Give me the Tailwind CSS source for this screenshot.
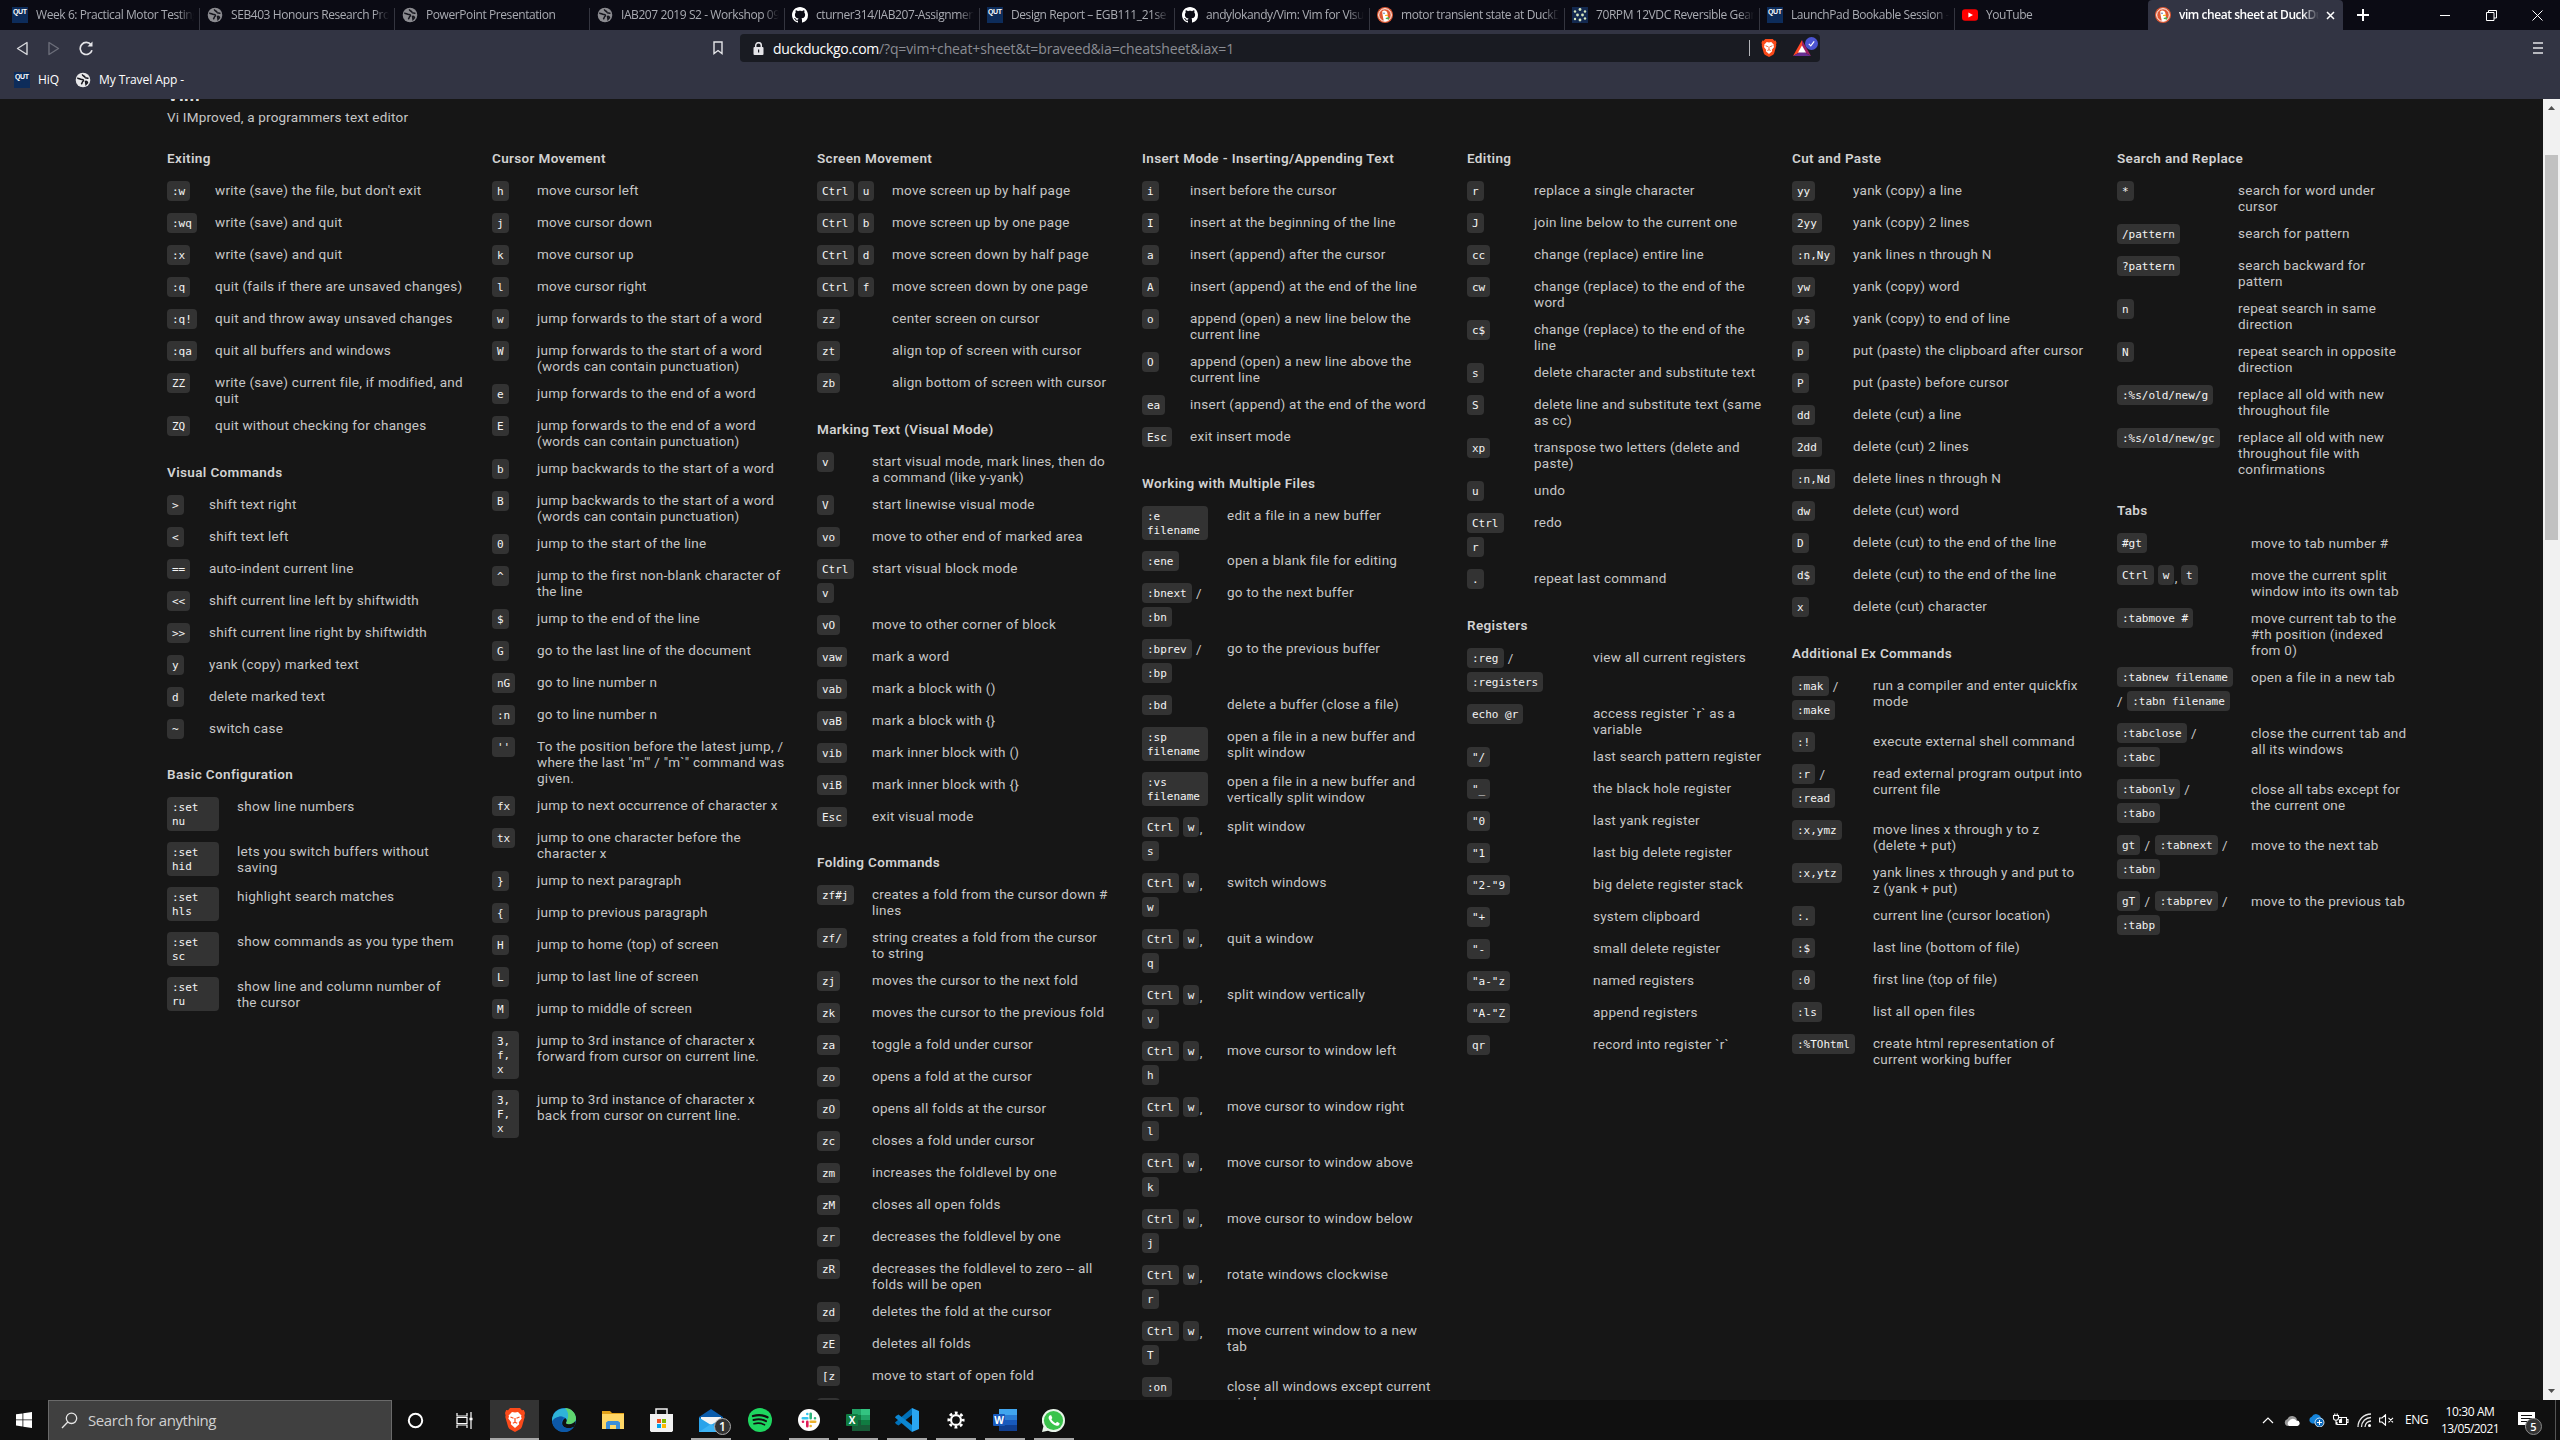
<!DOCTYPE html>
<html lang="en">
<head>
<meta charset="utf-8">
<title>vim cheat sheet at DuckDuckGo</title>
<script src="https://cdn.jsdelivr.net/npm/@tailwindcss/browser@4"></script>
</head>
<body class="bg-[#161616]">
<svg class="hidden">
  <symbol id="qut" viewBox="0 0 16 16"><rect width="16" height="16" fill="#0d2c5a"/><text x="8" y="7" font-size="7" font-weight="700" fill="#fff" text-anchor="middle" font-family="Liberation Sans" textLength="14">QUT</text></symbol>
  <symbol id="globe" viewBox="0 0 16 16"><circle cx="8" cy="8" r="7.3" fill="currentColor"/><path d="M2.2 6.2C4 6 5 7.500 6.800 7.400 8.500 7.300 9 8.600 7.900 9.400 7 10 7.300 11 6.300 12.200M7.500 2.200C7 4 9.500 3.800 10 5.200 10.500 6.500 12 5.500 13.500 6.500M10.500 9.500c1-.5 2 .2 2 1.200l-1.500 1.600z" fill="none" stroke="#15151d" stroke-width="1.500"/></symbol>
  <symbol id="github" viewBox="0 0 16 16"><path fill="#fff" d="M8 0C3.580 0 0 3.580 0 8c0 3.540 2.290 6.530 5.470 7.590.4.070.55-.17.55-.38 0-.19-.01-.82-.01-1.490-2.010.37-2.530-.49-2.690-.94-.09-.23-.48-.94-.82-1.130-.28-.15-.68-.52-.01-.53.63-.01 1.080.58 1.230.82.72 1.210 1.870.87 2.330.66.07-.52.28-.87.51-1.070-1.780-.2-3.640-.89-3.640-3.950 0-.87.31-1.590.82-2.150-.08-.2-.36-1.020.08-2.120 0 0 .67-.21 2.200.82.64-.18 1.320-.27 2-.27s1.360.09 2 .27c1.530-1.040 2.200-.82 2.200-.82.44 1.100.16 1.920.08 2.120.51.56.82 1.270.82 2.150 0 3.070-1.870 3.750-3.650 3.950.29.25.54.73.54 1.480 0 1.070-.01 1.930-.01 2.200 0 .21.15.46.55.38A8.010 8.010 0 0 0 16 8c0-4.420-3.580-8-8-8z"/></symbol>
  <symbol id="ddg" viewBox="0 0 16 16"><circle cx="8" cy="8" r="8" fill="#de5833"/><circle cx="8" cy="8" r="6.300" fill="none" stroke="#fff" stroke-width="1"/><path d="M5.300 4.200c1.500-1.400 5-.8 5.200 2.600.2 2.500.4 4.700.9 6.500-1.500 1-3.500 1-4.600.5C6.300 11 5 6.500 5.300 4.200z" fill="#fff"/><path d="M8 8.200c1.200-.6 3-.5 3.200 0 0 .7-2.300 1-3.200.9z" fill="#fdb813"/><path d="M8.500 11l3.500-1v2.500l-3-.6z" fill="#4caf50"/><circle cx="7" cy="6.200" r=".7" fill="#2d4f8e"/></symbol>
  <symbol id="dots" viewBox="0 0 16 16"><rect width="16" height="16" fill="#13294f"/><g fill="#d6e8c0"><circle cx="8" cy="2.500" r="1.400"/><circle cx="3" cy="4.500" r="1.200"/><circle cx="13" cy="4.500" r="1.200"/><circle cx="5.500" cy="8" r="1.400"/><circle cx="10.500" cy="8" r="1.400"/><circle cx="3" cy="12" r="1.200"/><circle cx="8" cy="13" r="1.400"/><circle cx="13" cy="11.500" r="1.200"/></g></symbol>
  <symbol id="youtube" viewBox="0 0 16 16"><rect y="2.200" width="16" height="11.600" rx="3" fill="#f00"/><path d="M6.400 5.400v5.200L11 8z" fill="#fff"/></symbol>
  <symbol id="brave" viewBox="0 0 20 24"><path d="M5 0h10l2 2.200 1.800-.2L20 5l-.6 2.500.3 1.500-2.700 9.500c-.4 1.300-1 2-2 2.700L10 24l-5-2.800c-1-.7-1.600-1.400-2-2.700L.3 9l.3-1.500L0 5l1.200-3 1.800.2z" fill="#fb4a1a"/><path d="M10 4.500l3-.5 3.500 3.500-.5 1.300.7 1.700-2.900 3.700.4 2-4.200 3.800-4.200-3.800.4-2-2.900-3.700.7-1.700-.5-1.300L7 4z" fill="#fff"/><path d="M5.500 9l3 1.200M14.500 9l-3 1.200M10 10v4M7.800 15.300l2.200-1 2.200 1" stroke="#fb4a1a" stroke-width="1.200" fill="none"/></symbol>
</svg>

<div class="flex h-[1440px] w-[2560px] flex-col overflow-hidden">
  <!-- Tab strip -->
  <div class="flex h-[30px] shrink-0 bg-[#0b0b14] pl-[5px] font-['Open_Sans',sans-serif] text-[12px] text-[#a9abb2]">
    <div id="tabs" class="flex"></div>
    <div class="-ml-[2px] flex h-[30px] w-[195px] items-center rounded-t-[4px] bg-[#323443] pl-[7px]">
      <svg class="size-4 shrink-0"><use href="#ddg"/></svg>
      <span class="ml-2 w-[140px] overflow-hidden whitespace-nowrap font-semibold tracking-[-0.45px] text-white [mask-image:linear-gradient(to_right,black_88%,transparent)]">vim cheat sheet at DuckDuckGo</span>
      <svg class="ml-[7px] size-[9px] shrink-0" viewBox="0 0 9 9" stroke="#fff" stroke-width="1.500"><path d="M1 1l7 7M8 1l-7 7"/></svg>
    </div>
    <svg class="ml-[13px] mt-[8px] size-[14px]" viewBox="0 0 14 14" stroke="#fff" stroke-width="2"><path d="M7 1v12M1 7h12"/></svg>
    <div class="ml-auto flex items-center gap-[35px] pr-[17px]">
      <svg class="size-[11px]" viewBox="0 0 11 11" stroke="#fff"><path d="M0 5.500h10"/></svg>
      <svg class="size-[11px]" viewBox="0 0 11 11" stroke="#fff" fill="none"><path d="M.5 2.500h7.500v8H.5zM2.500 2.500v-2h8v7.500h-2.500"/></svg>
      <svg class="size-[11px]" viewBox="0 0 11 11" stroke="#fff"><path d="M.5.5l10 10M10.500.5l-10 10"/></svg>
    </div>
  </div>
  <!-- Toolbar -->
  <div class="flex h-9 shrink-0 items-center bg-[#323443] pl-4">
    <svg class="h-[15px] w-3" viewBox="0 0 12 15" fill="none" stroke="#d6d7db" stroke-width="1.400" stroke-linejoin="round"><path d="M11 1.500v12L1.500 7.500z"/></svg>
    <svg class="ml-5 h-[15px] w-3" viewBox="0 0 12 15" fill="none" stroke="#6b6d79" stroke-width="1.400" stroke-linejoin="round"><path d="M1 1.500v12l9.500-6z"/></svg>
    <svg class="ml-[19px] size-[15px]" viewBox="0 0 15 15" fill="none" stroke="#e4e4e8" stroke-width="1.700"><path d="M13 9.200A6 6 0 1 1 12 3.800"/><path d="M13.500.5v5H8.500z" fill="#e4e4e8" stroke="none"/></svg>
    <svg class="ml-[619px] h-[14px] w-[10px]" viewBox="0 0 10 14" fill="none" stroke="#e4e4e8" stroke-width="1.400"><path d="M1 1h8v11.500L5 9.500l-4 3z"/></svg>
    <div class="ml-[17px] flex h-7 w-[1080px] items-center rounded-[4px] bg-[#191b22] pl-[13px] font-['Open_Sans',sans-serif] text-[14px]">
      <svg class="h-[13px] w-[11px]" viewBox="0 0 11 13"><rect x=".5" y="5" width="10" height="8" rx="1" fill="#e4e4e8"/><path d="M2.700 5V3.500a2.800 2.800 0 0 1 5.600 0V5" fill="none" stroke="#e4e4e8" stroke-width="1.500"/><rect x="5" y="7.500" width="1.200" height="3" fill="#191b22"/></svg>
      <div class="ml-[9px] whitespace-nowrap text-[#8b8d94]"><span data-w="106" class="text-white">duckduckgo.com</span><span data-w="355">/?q=vim+cheat+sheet&amp;t=braveed&amp;ia=cheatsheet&amp;iax=1</span></div>
      <div class="ml-auto h-4 w-px bg-[#b4b5ba]"></div>
      <svg class="ml-[11px] h-[18px] w-4"><use href="#brave"/></svg>
      <div class="relative ml-4 mr-[7px] h-[18px] w-[20px]">
        <svg class="absolute bottom-px left-0 h-4 w-[18px]" viewBox="0 0 18 16"><path d="M9 0L0 16l9-5z" fill="#ff4724"/><path d="M9 0l9 16-9-5z" fill="#9e1f63"/><path d="M0 16h18l-9-5z" fill="#662d91"/><path d="M9 5.500l4 7H5z" fill="#fff"/></svg>
        <svg class="absolute right-[-5px] top-[-2px] size-[13px]" viewBox="0 0 13 13"><circle cx="6.500" cy="6.500" r="6.500" fill="#4c54d2"/><path d="M3.800 6.800l2 2 3.400-4.500" fill="none" stroke="#fff" stroke-width="1.200"/></svg>
      </div>
    </div>
    <svg class="ml-auto mr-[17px] h-3 w-[10px]" viewBox="0 0 10 12" stroke="#e4e4e8" stroke-width="1.600"><path d="M0 1h10M0 6h10M0 11h10"/></svg>
  </div>
  <!-- Bookmarks bar -->
  <div class="flex h-[33px] shrink-0 items-center bg-[#323443] pb-[5px] pl-[14px] font-['Open_Sans',sans-serif] text-[12px] text-white">
    <svg class="size-4"><use href="#qut"/></svg><span data-w="21" class="ml-2">HiQ</span>
    <svg class="ml-4 size-4 text-[#e8e8ea]"><use href="#globe"/></svg><span data-w="85" class="ml-2 whitespace-nowrap">My Travel App -</span>
  </div>

  <!-- Page -->
  <div class="flex h-[1301px] shrink-0 overflow-hidden">
    <main class="w-[2543px] pl-[167px] font-['Roboto',sans-serif] text-[13.5px] leading-4 tracking-[0.26px] text-[#c6c6c6]">
      <div class="mt-[-16px] h-[45.4px]">
        <h1 class="h-[26px] text-[18px] font-bold leading-6 text-[#dedede]">Vim</h1>
        <p class="tracking-[0.2px]">Vi IMproved, a programmers text editor</p>
      </div>
      <div id="sheet" class="flex"></div>
    </main>
    <div class="flex w-[17px] flex-col items-center bg-[#f1f1f1]">
      <svg class="mt-[7px] h-[4px] w-[7px]" viewBox="0 0 7 4"><path d="M3.500 0L7 4H0z" fill="#505050"/></svg>
      <div class="mt-[45px] h-[385px] w-[13px] bg-[#c1c1c1]"></div>
      <svg class="mb-[7px] mt-auto h-[4px] w-[7px]" viewBox="0 0 7 4"><path d="M3.500 4L7 0H0z" fill="#505050"/></svg>
    </div>
  </div>

  <!-- Taskbar -->
  <div class="flex h-10 shrink-0 items-stretch bg-[#101010] font-['Open_Sans',sans-serif] text-white">
    <div class="flex w-12 items-center justify-center"><svg class="size-4" viewBox="0 0 16 16" fill="#fff"><path d="M0 2.300l6.500-.9v6.100H0zM7.300 1.300L16 0v7.500H7.300zM0 8.300h6.500v6.200L0 13.600zM7.300 8.300H16V16l-8.700-1.200z"/></svg></div>
    <div class="flex w-[344px] items-center border border-b-0 border-[#6a6a6a] bg-[#404040] pl-[12px]">
      <svg class="size-[17px]" viewBox="0 0 17 17" fill="none" stroke="#e6e6e6" stroke-width="1.300"><circle cx="10.500" cy="6.300" r="5.200"/><path d="M6.800 10L1 16"/></svg>
      <span data-w="128" class="ml-[10px] whitespace-nowrap text-[15px] text-[#d0d0d0]">Search for anything</span>
    </div>
    <div class="flex w-[47px] items-center justify-center"><svg class="size-[17px]" viewBox="0 0 17 17"><circle cx="8.500" cy="8.500" r="6.700" fill="none" stroke="#fff" stroke-width="2"/></svg></div>
    <div class="flex w-[51px] items-center justify-center"><svg class="size-[17px]" viewBox="0 0 17 17" fill="none" stroke="#fff" stroke-width="1.200"><path d="M1 1v3h10V1M1 16v-3h10v3M1 5.500h10v6H1zM15 0v17"/><path d="M13.500 7h3" stroke-width="2.500"/></svg></div>
    <div id="apps" class="flex"></div>
    <div class="ml-auto flex items-center">
      <svg class="h-[7px] w-3" viewBox="0 0 12 7" fill="none" stroke="#fff" stroke-width="1.200"><path d="M1 6l5-5 5 5"/></svg>
      <svg class="ml-[10px] h-[11px] w-[17px]" viewBox="0 0 17 11"><path d="M4 11a3.500 3.500 0 0 1-.5-6.900A5 5 0 0 1 13 5" fill="#9a9a9a"/><path d="M5 11a3 3 0 0 1 0-5 4.500 4.500 0 0 1 7.500-.5A2.800 2.800 0 0 1 13.500 11z" fill="#fff"/></svg>
      <svg class="ml-[7px] h-[14px] w-[17px]" viewBox="0 0 17 14"><path d="M4 10.500a3.500 3.500 0 0 1-.3-6.700A5 5 0 0 1 13 5a2.800 2.800 0 0 1 .5 5.500z" fill="#1584da"/><circle cx="11.500" cy="9.500" r="4.500" fill="#0f6cbd" stroke="#fff" stroke-width=".8"/><path d="M9 9.500h5M11.500 7v5" stroke="#fff"/></svg>
      <svg class="ml-[7px] h-[15px] w-[17px]" viewBox="0 0 17 15" fill="none" stroke="#fff" stroke-width="1.100"><path d="M7 4.500h7.500v7H5V9M14.500 6.500H16v3h-1.500M1.500 2.500h5v2.500c0 3-5 3-5 0zM2.800 2.500V.5M5.200 2.500V.5M4 7.500v4"/><path d="M7.500 7v2.500h2V6z" fill="#fff"/></svg>
      <svg class="ml-[8px] size-[15px]" viewBox="0 0 15 15" fill="none" stroke="#e6e6e6" stroke-width="1.300"><path d="M1 14A13 13 0 0 1 14 1M4.500 14A9.500 9.500 0 0 1 14 4.500M8 14A6 6 0 0 1 14 8"/><circle cx="12.500" cy="12.500" r="1.500" fill="#fff" stroke="none"/></svg>
      <svg class="ml-[7px] h-3 w-[15px]" viewBox="0 0 15 12" fill="none" stroke="#fff" stroke-width="1.100"><path d="M.6 4h2.400L6.500.8v10.400L3 8H.6zM9.500 3.800l4.500 4.500M14 3.800L9.500 8.300"/></svg>
      <span data-w="23" class="ml-[11px] whitespace-nowrap text-[12px]">ENG</span>
      <div class="ml-[12px] flex w-[60px] flex-col items-center whitespace-nowrap text-[12px] leading-[17.5px]"><span data-w="49">10:30 AM</span><span data-w="58">13/05/2021</span></div>
      <div class="relative ml-[17px] mr-[14px] size-6">
        <svg class="absolute left-px top-[4px] h-[17px] w-[17px]" viewBox="0 0 17 17"><path d="M0 0h17v13h-6.500L7 16.500V13H0z" fill="#fff"/><path d="M3 3.500h11M3 6.500h11M3 9.500h8" stroke="#101010" stroke-width="1.200"/></svg>
        <div class="absolute left-[8px] top-[10px] flex size-[17px] items-center justify-center rounded-full border border-[#888] bg-[#333] text-[11px] font-semibold leading-none">5</div>
      </div>
      <div class="mr-1 h-10 w-px bg-[#555]"></div>
    </div>
  </div>
</div>

<script>
const esc = s => s.replace(/&/g, '&amp;').replace(/</g, '&lt;');

const tabs = [
  ['qut', 'Week 6: Practical Motor Testing'], ['globe', 'SEB403 Honours Research Project'], ['globe', 'PowerPoint Presentation'],
  ['globe', 'IAB207 2019 S2 - Workshop 09'], ['github', 'cturner314/IAB207-Assignment'], ['qut', 'Design Report – EGB111_21se1'],
  ['github', 'andylokandy/Vim: Vim for Visual'], ['ddg', 'motor transient state at DuckDuckGo'], ['dots', '70RPM 12VDC Reversible Gear'],
  ['qut', 'LaunchPad Bookable Session -'], ['youtube', 'YouTube']
];
document.getElementById('tabs').innerHTML = tabs.map(([icon, title], i) =>
  `<div class="flex h-[30px] w-[195px] items-center pl-[7px]"><svg class="size-4 shrink-0 text-[#8b8b90]"><use href="#${icon}"/></svg>
   <span class="ml-2 w-[158px] overflow-hidden whitespace-nowrap tracking-[-0.42px] [mask-image:linear-gradient(to_right,black_90%,transparent)]">${title}</span>
   <i class="ml-auto mt-[8px] h-[22px] w-px ${i < 10 ? 'bg-[#34353f]' : ''}"></i></div>`).join('');

// Keys: "¦" separates parts, "¶" starts a new line, "/" and "," are plain text.
const columns = [
  [['Exiting', 'w-[48px]', [[':w', "write (save) the file, but don't exit"], [':wq', 'write (save) and quit'], [':x', 'write (save) and quit'], [':q', 'quit (fails if there are unsaved changes)'], [':q!', 'quit and throw away unsaved changes'], [':qa', 'quit all buffers and windows'], ['ZZ', 'write (save) current file, if modified, and\nquit'], ['ZQ', 'quit without checking for changes']]],
   ['Visual Commands', 'w-[42px]', [['>', 'shift text right'], ['<', 'shift text left'], ['==', 'auto-indent current line'], ['<<', 'shift current line left by shiftwidth'], ['>>', 'shift current line right by shiftwidth'], ['y', 'yank (copy) marked text'], ['d', 'delete marked text'], ['~', 'switch case']]],
   ['Basic Configuration', 'w-[70px]', [[':set\nnu', 'show line numbers'], [':set\nhid', 'lets you switch buffers without\nsaving'], [':set\nhls', 'highlight search matches'], [':set\nsc', 'show commands as you type them'], [':set\nru', 'show line and column number of\nthe cursor']]]],
  [['Cursor Movement', 'w-[45px]', [['h', 'move cursor left'], ['j', 'move cursor down'], ['k', 'move cursor up'], ['l', 'move cursor right'], ['w', 'jump forwards to the start of a word'], ['W', 'jump forwards to the start of a word\n(words can contain punctuation)'], ['e', 'jump forwards to the end of a word'], ['E', 'jump forwards to the end of a word\n(words can contain punctuation)'], ['b', 'jump backwards to the start of a word'], ['B', 'jump backwards to the start of a word\n(words can contain punctuation)'], ['0', 'jump to the start of the line'], ['^', 'jump to the first non-blank character of\nthe line'], ['$', 'jump to the end of the line'], ['G', 'go to the last line of the document'], ['nG', 'go to line number n'], [':n', 'go to line number n'], ["''", 'To the position before the latest jump, /\nwhere the last "m\'" / "m`" command was\ngiven.'], ['fx', 'jump to next occurrence of character x'], ['tx', 'jump to one character before the\ncharacter x'], ['}', 'jump to next paragraph'], ['{', 'jump to previous paragraph'], ['H', 'jump to home (top) of screen'], ['L', 'jump to last line of screen'], ['M', 'jump to middle of screen'], ['3,\nf,\nx', 'jump to 3rd instance of character x\nforward from cursor on current line.'], ['3,\nF,\nx', 'jump to 3rd instance of character x\nback from cursor on current line.']]]],
  [['Screen Movement', 'w-[75px]', [['Ctrl¦u', 'move screen up by half page'], ['Ctrl¦b', 'move screen up by one page'], ['Ctrl¦d', 'move screen down by half page'], ['Ctrl¦f', 'move screen down by one page'], ['zz', 'center screen on cursor'], ['zt', 'align top of screen with cursor'], ['zb', 'align bottom of screen with cursor']]],
   ['Marking Text (Visual Mode)', 'w-[55px]', [['v', 'start visual mode, mark lines, then do\na command (like y-yank)'], ['V', 'start linewise visual mode'], ['vo', 'move to other end of marked area'], ['Ctrl¶v', 'start visual block mode'], ['vO', 'move to other corner of block'], ['vaw', 'mark a word'], ['vab', 'mark a block with ()'], ['vaB', 'mark a block with {}'], ['vib', 'mark inner block with ()'], ['viB', 'mark inner block with {}'], ['Esc', 'exit visual mode']]],
   ['Folding Commands', 'w-[55px]', [['zf#j', 'creates a fold from the cursor down #\nlines'], ['zf/', 'string creates a fold from the cursor\nto string'], ['zj', 'moves the cursor to the next fold'], ['zk', 'moves the cursor to the previous fold'], ['za', 'toggle a fold under cursor'], ['zo', 'opens a fold at the cursor'], ['zO', 'opens all folds at the cursor'], ['zc', 'closes a fold under cursor'], ['zm', 'increases the foldlevel by one'], ['zM', 'closes all open folds'], ['zr', 'decreases the foldlevel by one'], ['zR', 'decreases the foldlevel to zero -- all\nfolds will be open'], ['zd', 'deletes the fold at the cursor'], ['zE', 'deletes all folds'], ['[z', 'move to start of open fold'], [']z', 'move to end of open fold']]]],
  [['Insert Mode - Inserting/Appending Text', 'w-[48px]', [['i', 'insert before the cursor'], ['I', 'insert at the beginning of the line'], ['a', 'insert (append) after the cursor'], ['A', 'insert (append) at the end of the line'], ['o', 'append (open) a new line below the\ncurrent line'], ['O', 'append (open) a new line above the\ncurrent line'], ['ea', 'insert (append) at the end of the word'], ['Esc', 'exit insert mode']]],
   ['Working with Multiple Files', 'w-[85px]', [[':e\nfilename', 'edit a file in a new buffer'], [':ene', 'open a blank file for editing'], [':bnext¦/¶:bn', 'go to the next buffer'], [':bprev¦/¶:bp', 'go to the previous buffer'], [':bd', 'delete a buffer (close a file)'], [':sp\nfilename', 'open a file in a new buffer and\nsplit window'], [':vs\nfilename', 'open a file in a new buffer and\nvertically split window'], ['Ctrl¦w¦,¶s', 'split window'], ['Ctrl¦w¦,¶w', 'switch windows'], ['Ctrl¦w¦,¶q', 'quit a window'], ['Ctrl¦w¦,¶v', 'split window vertically'], ['Ctrl¦w¦,¶h', 'move cursor to window left'], ['Ctrl¦w¦,¶l', 'move cursor to window right'], ['Ctrl¦w¦,¶k', 'move cursor to window above'], ['Ctrl¦w¦,¶j', 'move cursor to window below'], ['Ctrl¦w¦,¶r', 'rotate windows clockwise'], ['Ctrl¦w¦,¶T', 'move current window to a new\ntab'], [':on', 'close all windows except current\nwindow']]]],
  [['Editing', 'w-[67px]', [['r', 'replace a single character'], ['J', 'join line below to the current one'], ['cc', 'change (replace) entire line'], ['cw', 'change (replace) to the end of the\nword'], ['c$', 'change (replace) to the end of the\nline'], ['s', 'delete character and substitute text'], ['S', 'delete line and substitute text (same\nas cc)'], ['xp', 'transpose two letters (delete and\npaste)'], ['u', 'undo'], ['Ctrl¶r', 'redo'], ['.', 'repeat last command']]],
   ['Registers', 'w-[126px]', [[':reg¦/¶:registers', 'view all current registers'], ['echo @r', 'access register `r` as a\nvariable'], ['"/', 'last search pattern register'], ['"_', 'the black hole register'], ['"0', 'last yank register'], ['"1', 'last big delete register'], ['"2-"9', 'big delete register stack'], ['"+', 'system clipboard'], ['"-', 'small delete register'], ['"a-"z', 'named registers'], ['"A-"Z', 'append registers'], ['qr', 'record into register `r`']]]],
  [['Cut and Paste', 'w-[61px]', [['yy', 'yank (copy) a line'], ['2yy', 'yank (copy) 2 lines'], [':n,Ny', 'yank lines n through N'], ['yw', 'yank (copy) word'], ['y$', 'yank (copy) to end of line'], ['p', 'put (paste) the clipboard after cursor'], ['P', 'put (paste) before cursor'], ['dd', 'delete (cut) a line'], ['2dd', 'delete (cut) 2 lines'], [':n,Nd', 'delete lines n through N'], ['dw', 'delete (cut) word'], ['D', 'delete (cut) to the end of the line'], ['d$', 'delete (cut) to the end of the line'], ['x', 'delete (cut) character']]],
   ['Additional Ex Commands', 'w-[81px]', [[':mak¦/¶:make', 'run a compiler and enter quickfix\nmode'], [':!', 'execute external shell command'], [':r¦/¶:read', 'read external program output into\ncurrent file'], [':x,ymz', 'move lines x through y to z\n(delete + put)'], [':x,ytz', 'yank lines x through y and put to\nz (yank + put)'], [':.', 'current line (cursor location)'], [':$', 'last line (bottom of file)'], [':0', 'first line (top of file)'], [':ls', 'list all open files'], [':%TOhtml', 'create html representation of\ncurrent working buffer']]]],
  [['Search and Replace', 'w-[121px]', [['*', 'search for word under\ncursor'], ['/pattern', 'search for pattern'], ['?pattern', 'search backward for\npattern'], ['n', 'repeat search in same\ndirection'], ['N', 'repeat search in opposite\ndirection'], [':%s/old/new/g', 'replace all old with new\nthroughout file'], [':%s/old/new/gc', 'replace all old with new\nthroughout file with\nconfirmations']]],
   ['Tabs', 'w-[134px]', [['#gt', 'move to tab number #'], ['Ctrl¦w¦,¦t', 'move the current split\nwindow into its own tab'], [':tabmove #', 'move current tab to the\n#th position (indexed\nfrom 0)'], [':tabnew filename¶/¦:tabn filename', 'open a file in a new tab'], [':tabclose¦/¶:tabc', 'close the current tab and\nall its windows'], [':tabonly¦/¶:tabo', 'close all tabs except for\nthe current one'], ['gt¦/¦:tabnext¦/¶:tabn', 'move to the next tab'], ['gT¦/¦:tabprev¦/¶:tabp', 'move to the previous tab']]]]
];
const badgeWidth = s => s.endsWith('filename') ? 'w-[66.4px]' : s.startsWith(':set') ? 'w-[51.6px]' : 'w-[26.5px]';
const part = s => {
  if (s === '/') return '<span>/</span>';
  if (s === ',') return '<span class="-ml-[4px] mt-[3px] -mr-px">,</span>';
  const many = s.includes('\n');
  return `<code class="mt-[2px] whitespace-pre rounded-[4px] bg-[#333] px-[5px] pb-[2px] pt-[4px] font-['DejaVu_Sans_Mono',monospace] text-[11px] leading-[14px] tracking-normal text-[#f4f4f4] ${many ? 'mb-px ' + badgeWidth(s) : 'mb-[2px]'}">${esc(s)}</code>`;
};
const keys = s => s.split('¶').map(l => `<div class="flex items-center gap-[4.300px]">${l.split('¦').map(part).join('')}</div>`).join('');
document.getElementById('sheet').innerHTML = columns.map(col => `<div class="w-[325px] shrink-0">${col.map(([title, w, rows]) =>
  `<section><h2 class="h-[46.6px] pt-[21.6px] text-[13.5px] font-semibold tracking-[0.36px] text-[#d2d2d2]">${title}</h2>${rows.map(([k, d]) =>
    `<div class="flex"><div class="${w} shrink-0 whitespace-nowrap py-1">${keys(k)}</div><div class="whitespace-pre pb-[3.700px] pt-[7.300px]">${esc(d)}</div></div>`).join('')}</section>`).join('')}</div>`).join('');

const apps = [
  ['full', '<svg class="h-6 w-5"><use href="#brave"/></svg>'],
  ['', '<svg class="size-6" viewBox="0 0 24 24"><circle cx="12" cy="12" r="12" fill="#0f6fc5"/><path d="M1 8C4-1 20-3 23.500 9c1 5-3 7.500-7 7.200-2 0-3-.8-2.300-2C15.500 12 13.500 8.500 9 8.500 5 8.500 2 11 0 14 0 11 0 10 1 8z" fill="#2fb4d8"/><path d="M13 0c6 0 11 5 11 10.500 0 4-4 6-7.500 5.700-2 0-3-.8-2.300-2C16 11 18 5 13 0z" fill="#5fd66f"/><path d="M14.200 14.200c-.7 1.200.3 2 2.300 2 3 .2 5.500-1 6.800-3.200.5 2.500-.5 5.500-1.800 6-6 3-10 .5-11-2-1-3 1-6.500 3-6.800 1.500 1.200 1.500 2.800.7 4z" fill="#111"/><path d="M9 8.500C5 8.500 1 11 0 13.500 1 20 7 24 12 24c4 0 8-2 9.500-5-6 3-11.500 0-12-4-.2-2.500 1-4 2.500-5-1-1-2-1.500-3-1.500z" fill="#0d59a8"/></svg>'],
  ['', '<svg class="h-[18px] w-[22px]" viewBox="0 0 22 18"><path d="M0 0h8l2 2h12v16H0z" fill="#e2a21a"/><path d="M0 3h22v15H0z" fill="#ffd766"/><path d="M4 18v-6.500L6 10h10l2 1.500V18h-4v-4H8v4z" fill="#3d8fd9"/></svg>'],
  ['', '<svg class="h-6 w-[23px]" viewBox="0 0 23 24"><path d="M6 7V1h11v6" fill="none" stroke="#eee" stroke-width="1.500"/><path d="M0 6h23v16.500l-1 1.500H1l-1-1.500z" fill="#f2f2f2"/><path d="M7 11h4v4H7z" fill="#f25022"/><path d="M12 11h4v4h-4z" fill="#7fba00"/><path d="M7 16h4v4H7z" fill="#00a4ef"/><path d="M12 16h4v4h-4z" fill="#ffb900"/></svg>'],
  ['bar', '<svg class="h-[23px] w-6" viewBox="0 0 24 23"><path d="M0 8l12-8 12 8v3H0z" fill="#0b5cab"/><path d="M2 8h20v8H2z" fill="#f4f4f4"/><path d="M0 8.500L12 16l12-7.500V23H0z" fill="#2aa3ea"/><path d="M0 23l12-8 12 8z" fill="#3cb4f5"/></svg><div class="absolute left-[28px] top-[18px] flex size-[17px] items-center justify-center rounded-full border border-[#aaa] bg-[#333] text-[12px] font-semibold leading-none">1</div>'],
  ['', '<svg class="size-6" viewBox="0 0 24 24" fill="none" stroke="#111" stroke-linecap="round"><circle cx="12" cy="12" r="12" fill="#1ed760" stroke="none"/><path d="M5 8c5-1.500 10.500-1 14.500 1.300" stroke-width="2.300"/><path d="M5.500 12c4.500-1.300 9-.8 12.500 1.200" stroke-width="2"/><path d="M6 15.700c4-1 7.500-.6 10.500 1.100" stroke-width="1.600"/></svg>'],
  ['bar', '<svg class="size-[22px]" viewBox="0 0 22 22" stroke-width="2.600" stroke-linecap="round"><circle cx="11" cy="11" r="11" fill="#fff"/><path d="M9.300 5v.01M4.800 9.300h4.500" stroke="#36c5f0"/><path d="M12.700 4.800v4.500M17 9.300v.01" stroke="#2eb67d"/><path d="M12.700 12.700h4.500M12.700 17v.01" stroke="#ecb22e"/><path d="M9.300 12.700v4.500M5 12.700v.01" stroke="#e01e5a"/></svg>'],
  ['bar', '<svg class="h-[22px] w-6" viewBox="0 0 24 22"><path d="M6 0h9v22H6z" fill="#21a366"/><path d="M15 0h9v6h-9z" fill="#33c481"/><path d="M6 6h9v5H6z" fill="#107c41"/><path d="M15 6h9v5h-9z" fill="#21a366"/><path d="M6 11h18v11H6z" fill="#185c37"/><path d="M15 11h9v5h-9z" fill="#107c41"/><rect y="5" width="12" height="12" rx="1" fill="#107c41"/><text x="6" y="14.500" font-size="10" font-weight="700" fill="#fff" text-anchor="middle">X</text></svg>'],
  ['bar', '<svg class="size-6" viewBox="0 0 24 24"><path d="M17 0v7L3.500 17.500 1 16 0 14.500z" fill="#0070b8"/><path d="M17 24v-7L3.500 6.500 1 8 0 9.500z" fill="#0c86d1"/><path d="M17 0l7 3v18l-7 3z" fill="#2aa6f2"/></svg>'],
  ['bar', '<svg class="size-[18px]" viewBox="0 0 20 20" fill="none" stroke="#fff"><circle cx="10" cy="10" r="5.500" stroke-width="2.400"/><circle cx="10" cy="10" r="8" stroke-width="3" stroke-dasharray="3.140 3.140" stroke-dashoffset="1.570"/></svg>'],
  ['bar', '<svg class="h-[22px] w-6" viewBox="0 0 24 22"><path d="M6 0h18v6H6z" fill="#41a5ee"/><path d="M6 6h18v5H6z" fill="#2b7cd3"/><path d="M6 11h18v5H6z" fill="#185abd"/><path d="M6 16h18v6H6z" fill="#103f91"/><rect y="5" width="12" height="12" rx="1" fill="#185abd"/><text x="6" y="14.500" font-size="10" font-weight="700" fill="#fff" text-anchor="middle">W</text></svg>'],
  ['bar', '<svg class="size-[23px]" viewBox="0 0 24 24"><path d="M12 0a12 12 0 0 1 0 24c-2 0-4-.5-5.700-1.400L0 24l1.500-6A12 12 0 0 1 12 0z" fill="#e8f5e9"/><circle cx="12" cy="12" r="10" fill="#3ac34c"/><path d="M8.300 6.500c-1.500.8-2 2.800-.6 5 2 3.300 4.300 5.300 7.500 6 2 .3 3.200-1 3.200-2.700l-2.700-1.400-1.400 1.500c-2-.8-3.500-2.200-4.500-4.100l1-1.400-1.200-2.900z" fill="#fff"/></svg>']
];
document.getElementById('apps').innerHTML = apps.map(([state, icon]) =>
  `<div class="relative flex w-[49px] items-center justify-center ${state === 'full' ? 'bg-[#333]' : ''}">${icon}${state ? `<i class="absolute bottom-0 h-[2px] bg-[#a8a8a8] ${state === 'full' ? 'w-full' : 'w-10'}"></i>` : ''}</div>`).join('');

// Spread letters so interface labels keep a fixed width.
window.addEventListener('load', () => document.querySelectorAll('[data-w]').forEach(e => {
  const range = document.createRange();
  range.selectNodeContents(e);
  e.style.letterSpacing = '0px';
  e.style.letterSpacing = (e.dataset.w - range.getBoundingClientRect().width) / e.textContent.length + 'px';
}));
</script>
</body>
</html>
